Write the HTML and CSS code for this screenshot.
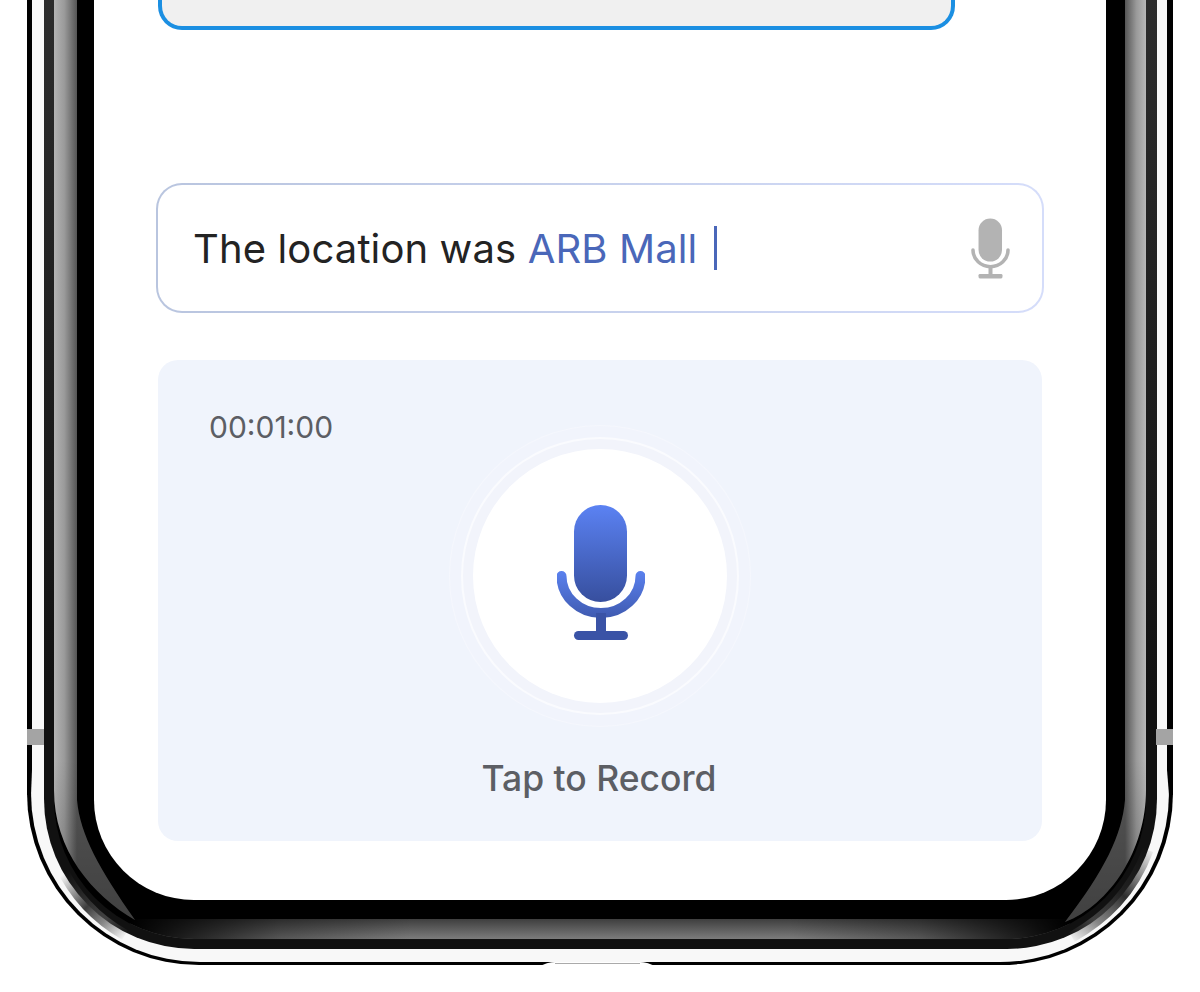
FILE: index.html
```html
<!DOCTYPE html>
<html lang="en">
<head>
<meta charset="utf-8">
<title>Voice input</title>
<link rel="stylesheet" href="styles.css">
</head>
<body>
<div class="stage">
  <svg class="frame" viewBox="0 0 1200 992" width="1200" height="992" aria-hidden="true">
    <defs>
      <clipPath id="innerClip">
        <rect x="54" y="-300" width="1092" height="1239" rx="140"/>
      </clipPath>
      <linearGradient id="sideL" x1="54" x2="77" y1="0" y2="0" gradientUnits="userSpaceOnUse">
        <stop offset="0" stop-color="#b4b4b4"/><stop offset=".45" stop-color="#9a9a9a"/><stop offset="1" stop-color="#555"/>
      </linearGradient>
      <linearGradient id="sideR" x1="1125" x2="1146" y1="0" y2="0" gradientUnits="userSpaceOnUse">
        <stop offset="0" stop-color="#555"/><stop offset=".55" stop-color="#9a9a9a"/><stop offset="1" stop-color="#b8b8b8"/>
      </linearGradient>
      <linearGradient id="fadeV" x1="0" x2="0" y1="760" y2="925" gradientUnits="userSpaceOnUse">
        <stop offset="0" stop-color="#000" stop-opacity="0"/><stop offset="1" stop-color="#000" stop-opacity=".25"/>
      </linearGradient>
      <linearGradient id="bandV" x1="0" x2="0" y1="0" y2="700" gradientUnits="userSpaceOnUse">
        <stop offset="0" stop-color="#2c2c2c"/><stop offset="1" stop-color="#111"/>
      </linearGradient>
      <linearGradient id="bottomBar" x1="0" x2="0" y1="919" y2="939" gradientUnits="userSpaceOnUse">
        <stop offset="0" stop-color="#3e3e3e"/><stop offset="1" stop-color="#7c7c7c"/>
      </linearGradient>
      <linearGradient id="barFade" x1="130" x2="1070" y1="0" y2="0" gradientUnits="userSpaceOnUse">
        <stop offset="0" stop-color="#000"/><stop offset=".16" stop-color="#000" stop-opacity=".3"/><stop offset=".3" stop-color="#000" stop-opacity="0"/>
        <stop offset=".7" stop-color="#000" stop-opacity="0"/><stop offset=".84" stop-color="#000" stop-opacity=".3"/><stop offset="1" stop-color="#000"/>
      </linearGradient>
      <linearGradient id="shadeL" x1="62" x2="125" y1="875" y2="938" gradientUnits="userSpaceOnUse">
        <stop offset="0" stop-color="#333" stop-opacity="0"/><stop offset=".45" stop-color="#333" stop-opacity=".95"/><stop offset=".7" stop-color="#555" stop-opacity=".7"/><stop offset="1" stop-color="#555" stop-opacity="0"/>
      </linearGradient>
      <linearGradient id="shadeR" x1="1150" x2="1070" y1="845" y2="940" gradientUnits="userSpaceOnUse">
        <stop offset="0" stop-color="#222" stop-opacity="0"/><stop offset=".45" stop-color="#222" stop-opacity=".95"/><stop offset=".75" stop-color="#555" stop-opacity=".7"/><stop offset="1" stop-color="#555" stop-opacity="0"/>
      </linearGradient>
    </defs>
    <rect x="27" y="-300" width="1146" height="1265" rx="172" fill="#000"/>
    <rect x="31" y="-300" width="1138" height="1262" rx="169" fill="#f8f8f8"/>
    <path d="M27 0H32V770L31 795H27Z" fill="#000"/>
    <path d="M1173 0H1167V770L1169 795H1173Z" fill="#000"/>
    <rect x="44" y="-300" width="1113" height="1249" rx="150" fill="url(#bandV)"/>
    <rect x="54" y="-300" width="1092" height="1239" rx="140" fill="#000"/>
    <g clip-path="url(#innerClip)">
      <rect x="130" y="919" width="940" height="20" fill="url(#bottomBar)"/>
      <rect x="130" y="919" width="940" height="20" fill="url(#barFade)"/>
    </g>
    <path d="M54 -10H77V800C80 835 100 870 135 920C92 895 54 850 54 790Z" fill="url(#sideL)"/>
    <path d="M54 740H77V800C80 835 100 870 135 920C92 895 54 850 54 790Z" fill="url(#fadeV)"/>
    <path d="M1146 -10H1125V800C1122 835 1105 870 1065 922C1110 905 1146 850 1146 790Z" fill="url(#sideR)"/>
    <path d="M1146 740H1125V800C1122 835 1105 870 1065 922C1110 905 1146 850 1146 790Z" fill="url(#fadeV)"/>
    <path d="M60 865C74 895 95 918 125 935" class="shade" stroke="url(#shadeL)"/>
    <path d="M1148 850C1132 893 1105 918 1072 937" class="shade" stroke="url(#shadeR)"/>
    <path d="M535 966C545 966 545 962 555 962H640C650 962 650 966 660 966Z" fill="#fff"/>
    <rect x="555" y="963" width="85" height="1" fill="#aaa"/>
    <rect x="27" y="729" width="17" height="16" fill="#a4a4a4"/>
    <rect x="1156" y="729" width="17" height="16" fill="#a4a4a4"/>
    <rect x="94" y="-300" width="1012" height="1200" rx="100" fill="#fff"/>
  </svg>

  <main class="content">
    <div class="top-card"></div>

    <div class="field">
      <p class="field-text">The location was <span class="entity">ARB Mall</span></p>
      <span class="caret"></span>
      <svg class="mic mic-small" viewBox="0 0 88 135" aria-hidden="true">
        <rect x="17" y="0" width="53" height="97" rx="26.5"/>
        <path class="mic-arc" d="M4.5 71A39.5 37.5 0 0 0 83.5 71"/>
        <rect x="39.5" y="108" width="9" height="20"/>
        <rect x="17" y="125" width="54" height="10" rx="3"/>
      </svg>
    </div>

    <section class="panel">
      <div class="timer">00:01:00</div>
      <button class="record" type="button">
        <svg class="mic mic-large" viewBox="0 0 88 135" aria-hidden="true">
          <defs>
            <linearGradient id="capsule" x1="0" x2="0" y1="0" y2="97" gradientUnits="userSpaceOnUse">
              <stop offset="0" stop-color="#5b82f3"/><stop offset="1" stop-color="#374f9e"/>
            </linearGradient>
            <linearGradient id="stand" x1="0" x2="0" y1="65" y2="113" gradientUnits="userSpaceOnUse">
              <stop offset="0" stop-color="#5b82f0"/><stop offset="1" stop-color="#3f5ab0"/>
            </linearGradient>
          </defs>
          <rect class="capsule-fill" x="17" y="0" width="53" height="97" rx="26.5"/>
          <path class="mic-arc stand-stroke" d="M4.5 71A39.5 37 0 0 0 83.5 71"/>
          <rect class="stand-fill" x="39" y="108" width="10" height="20"/>
          <rect class="stand-fill" x="17" y="126" width="54" height="9" rx="4.5"/>
        </svg>
      </button>
      <div class="hint">Tap to Record</div>
    </section>
  </main>
</div>
</body>
</html>
```
FILE: styles.css
```css
* { box-sizing: border-box; }
html, body { margin: 0; padding: 0; background: #fff; }
.stage {
  position: relative;
  width: 1200px;
  height: 992px;
  overflow: hidden;
  font-family: Inter, "Liberation Sans", sans-serif;
}
.frame { position: absolute; inset: 0; display: block; }
.shade { fill: none; stroke-width: 11; }

.content {
  position: relative;
  padding: 0 156px;
  display: flex;
  flex-direction: column;
}
.top-card {
  height: 30px;
  margin: 0 89px 0 2px;
  background: #f0f0f0;
  border: 4px solid #1b8fe2;
  border-top: 0;
  border-radius: 0 0 24px 24px;
}
.field {
  display: flex;
  align-items: center;
  height: 130px;
  margin-top: 153px;
  padding: 0 32px 0 35px;
  background: linear-gradient(#fff, #fff) padding-box, linear-gradient(90deg, #b9c5df, #d5ddfa) border-box;
  border: 2px solid transparent;
  border-radius: 26px;
}
.field-text {
  margin: 0;
  padding-top: 2px;
  font-size: 40px;
  line-height: 46px;
  letter-spacing: .12px;
  color: #232323;
  white-space: pre;
}
.entity { color: #4a67b9; }
.caret {
  width: 3px;
  height: 44px;
  margin-left: 17px;
  background: #4a67b9;
}
.mic { display: block; }
.mic-small { width: 39px; height: 61px; margin-left: auto; fill: #b3b3b3; stroke: none; }
.mic-arc { fill: none; stroke: #b3b3b3; stroke-width: 8; stroke-linecap: round; }
.mic-large { width: 88px; height: 135px; }
.capsule-fill { fill: url(#capsule); }
.stand-fill { fill: #3a53a6; }
.stand-stroke { stroke: url(#stand); stroke-width: 10; }

.panel {
  display: flex;
  flex-direction: column;
  align-items: center;
  height: 481px;
  margin: 47px 2px 0;
  padding-top: 49px;
  background: #f0f4fc;
  border-radius: 20px;
}
.timer {
  align-self: flex-start;
  margin-left: 51px;
  font-size: 30px;
  line-height: 36px;
  color: #5c5e64;
}
.record {
  display: flex;
  align-items: center;
  justify-content: center;
  width: 254px;
  height: 254px;
  margin: 4px 0 0;
  padding: 0 0 7px 2px;
  border: 0;
  border-radius: 50%;
  background: #fff;
  box-shadow: 0 0 0 10px #f2f4fb, 0 0 0 12px #fafbfe, 0 0 0 23px #f1f4fc, 0 0 0 24px #f5f7fd;
}
.hint {
  margin: 56px 2px 0 0;
  font-size: 35.5px;
  font-weight: 500;
  line-height: 40px;
  color: #5c5e64;
}
```
